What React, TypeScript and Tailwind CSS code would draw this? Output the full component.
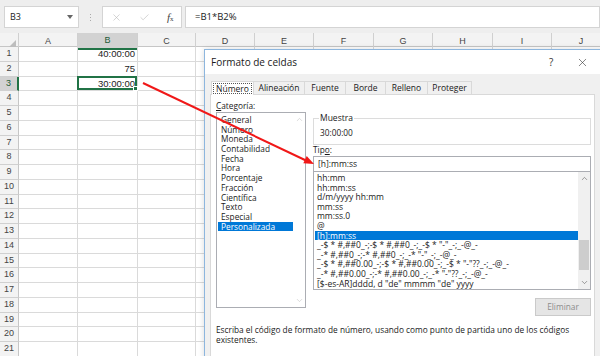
import { X, Check, ChevronUp, ChevronDown } from "lucide-react";

const gridCols = "grid grid-cols-[19px_59px_60px_58px_59px_59px_60px_59px_60px_59px_59px]";
const letters = ["A", "B", "C", "D", "E", "F", "G", "H", "I", "J"];

const values: Record<number, string> = { 1: "40:00:00", 2: "75", 3: "30:00:00" };

const categories = [
    "General", "Número", "Moneda", "Contabilidad", "Fecha", "Hora",
    "Porcentaje", "Fracción", "Científica", "Texto", "Especial", "Personalizada",
];

const types = [
    "hh:mm",
    "hh:mm:ss",
    "d/m/yyyy hh:mm",
    "mm:ss",
    "mm:ss.0",
    "@",
    "[h]:mm:ss",
    '_-$ * #,##0_-;-$ * #,##0_-;_-$ * "-"_-;_-@_-',
    '_-* #,##0_-;-* #,##0_-;_-* "-"_-;_-@_-',
    '_-$ * #,##0.00_-;-$ * #,##0.00_-;_-$ * "-"??_-;_-@_-',
    '_-* #,##0.00_-;-* #,##0.00_-;_-* "-"??_-;_-@_-',
    '[$-es-AR]dddd, d "de" mmmm "de" yyyy',
];

const tabs = ["Número", "Alineación", "Fuente", "Borde", "Relleno", "Proteger"];
const tabWidths = ["w-[43px]", "w-[51px]", "w-[41px]", "w-[40px]", "w-[42px]", "w-[44px]"];

function FormulaBar() {
    return (
        <div className="h-[33px] bg-[#eeeeee] flex items-start pt-[6px] pl-[4px] font-['Open_Sans',sans-serif] text-[9px] text-[#222]">
            <div className="w-[75px] h-[22px] bg-white border border-[#d4d4d4] flex items-center justify-between pl-[5px] pr-[5px]">
                <span>B3</span>
                <svg width="6" height="4" viewBox="0 0 6 4"><path d="M0 0h6L3 4z" fill="#666" /></svg>
            </div>
            <div className="w-[23px] h-[22px] flex flex-col items-center justify-center gap-[2px]">
                <span className="w-[1px] h-[1px] bg-[#aaa]" />
                <span className="w-[1px] h-[1px] bg-[#aaa]" />
                <span className="w-[1px] h-[1px] bg-[#aaa]" />
            </div>
            <div className="w-[80px] h-[22px] bg-white border border-[#d4d4d4] flex items-center pl-[8px] gap-[17px]">
                <X size={11} strokeWidth={1.3} color="#b8b8b8" />
                <Check size={11} strokeWidth={1.3} color="#b8b8b8" />
                <span className="font-['Liberation_Serif',serif] italic text-[11px] text-[#444] leading-none">
                    f<span className="text-[7px] not-italic">x</span>
                </span>
            </div>
            <div className="ml-[3px] flex-1 h-[22px] bg-white border border-[#d4d4d4] flex items-center pl-[9px] text-[9.5px]">
                =B1*B2%
            </div>
        </div>
    );
}

function Sheet() {
    return (
        <div className="font-['Liberation_Sans',sans-serif] text-[9.5px] text-[#222]">
            <div className={`${gridCols} h-[14px] bg-[#f3f3f3] border-b border-[#c6c6c6]`}>
                <div className="border-r border-[#d0d0d0] flex items-end justify-end p-[2px]">
                    <svg width="8" height="8" viewBox="0 0 8 8"><path d="M8 0v8H0z" fill="#bdbdbd" /></svg>
                </div>
                {letters.map((l) => (
                    <div
                        key={l}
                        className={`flex items-center justify-center border-r border-[#d0d0d0] text-[9px] pt-[1px] ${l === "B" ? "bg-[#d2d2d2] border-b-2 border-b-[#217346] text-[#1e5b36]" : "text-[#444]"}`}
                    >
                        {l}
                    </div>
                ))}
            </div>
            {Array.from({ length: 21 }, (_, i) => i + 1).map((r) => (
                <div key={r} className={`${gridCols} h-[14.75px]`}>
                    <div
                        className={`flex items-center justify-center border-b border-[#d0d0d0] text-[9px] ${r === 3 ? "bg-[#d2d2d2] border-r-2 border-r-[#217346] text-[#1e5b36]" : "bg-[#f3f3f3] border-r border-r-[#c6c6c6] text-[#444]"}`}
                    >
                        {r}
                    </div>
                    {letters.map((l) => (
                        <div key={l} className="relative border-r border-b border-[#dadada] flex items-center justify-end pr-[2px] leading-none">
                            {l === "B" && values[r]}
                            {l === "B" && r === 3 && (
                                <div className="absolute -left-[1px] -top-[1px] right-0 bottom-0 border-2 border-[#217346]">
                                    <span className="absolute -right-[3px] -bottom-[3px] w-[5px] h-[5px] bg-[#217346] border border-white" />
                                </div>
                            )}
                        </div>
                    ))}
                </div>
            ))}
        </div>
    );
}

function ListScroll({ dim, thumb }: { dim?: boolean; thumb?: boolean }) {
    const c = dim ? "#c4c4c4" : "#606060";
    return (
        <div className={`w-[12px] flex flex-col items-center justify-between py-[2px] ${dim ? "" : "bg-[#f0f0f0]"}`}>
            <ChevronUp size={9} strokeWidth={1.6} color={c} />
            {thumb && <div className="w-[10px] h-[30px] bg-[#cdcdcd] mt-[57px]" />}
            <div className="flex-1" />
            <ChevronDown size={9} strokeWidth={1.6} color={c} />
        </div>
    );
}

function Dialog() {
    return (
        <div className="absolute left-[204px] top-[49px] w-[410px] h-[320px] border border-[#8db6de] bg-[#f0f0f0] font-['Open_Sans',sans-serif] text-[8.3px] text-[#1a1a1a] shadow-[0_0_6px_rgba(0,0,0,0.15)]">
            <div className="h-[24px] bg-white flex items-center pl-[6px]">
                <span className="w-[338px] text-[10px]">Formato de celdas</span>
                <span className="text-[10px] text-[#333]">?</span>
                <X size={13} strokeWidth={1.1} color="#333" className="ml-[23px]" />
            </div>
            <div className="pl-[5px] pt-[7px] w-[390px]">
                <div className="flex h-[13px] pl-[1px] text-[8.5px]">
                    {tabs.map((t, i) => (
                        <div
                            key={t}
                            className={`${tabWidths[i]} flex items-center justify-center border-t border-r border-[#d9d9d9] ${i === 0 ? "bg-white border-l -mb-[1px] h-[14px] relative z-10" : "bg-[#f0f0f0]"}`}
                        >
                            <span className={i === 0 ? "border border-dotted border-[#555] px-[2px] leading-[9px]" : ""}>{t}</span>
                        </div>
                    ))}
                </div>
                <div className="bg-white border border-[#d9d9d9] h-[280px] pl-[5px] pr-[3px]">
                    <div className="flex">
                        <div className="w-[90px]">
                            <div className="mt-[6px] leading-[10px]"><u>C</u>ategoría:</div>
                            <div className="mt-[1px] h-[196px] border border-[#abadb3] flex">
                                <div className="flex-1 pt-[2px] pl-[1px]">
                                    {categories.map((c) => (
                                        <div
                                            key={c}
                                            className={`leading-[9.7px] h-[9.7px] pl-[3px] ${c === "Personalizada" ? "bg-[#0078d7] text-white" : ""}`}
                                        >
                                            {c}
                                        </div>
                                    ))}
                                </div>
                                <ListScroll dim />
                            </div>
                        </div>
                        <div className="ml-[7px] w-[278px]">
                            <fieldset className="mt-[18px] h-[32px] border border-[#dcdcdc] pl-[6px]">
                                <legend className="px-[1px] -ml-[1px] leading-[10px] text-[8.5px]">Muestra</legend>
                                <div className="leading-[10px] mt-[5px]">30:00:00</div>
                            </fieldset>
                            <div className="leading-[10px]">Tip<u>o</u>:</div>
                            <div className="mt-[1px] h-[16px] border border-[#abadb3] flex items-center pl-[4px] text-[8.5px]">[h]:mm:ss</div>
                            <div className="h-[118px] border border-t-0 border-[#abadb3] flex overflow-hidden text-[8.5px]">
                                <div className="flex-1 pt-[1px] pl-[1px] overflow-hidden">
                                    {types.map((t) => (
                                        <div
                                            key={t}
                                            className={`leading-[9.6px] h-[9.6px] pl-[2px] whitespace-nowrap ${t === "[h]:mm:ss" ? "bg-[#0078d7] text-white" : ""}`}
                                        >
                                            {t}
                                        </div>
                                    ))}
                                </div>
                                <ListScroll thumb />
                            </div>
                            <div className="flex justify-end mt-[8px]">
                                <div className="w-[56px] h-[18px] bg-[#e5e5e5] border border-[#cacaca] flex items-center justify-center text-[#8c8c8c]">
                                    Eliminar
                                </div>
                            </div>
                        </div>
                    </div>
                    <div className="mt-[9px] leading-[10px] w-[375px]">
                        Escriba el código de formato de número, usando como punto de partida uno de los códigos existentes.
                    </div>
                </div>
            </div>
        </div>
    );
}

export default function App() {
    return (
        <div className="relative w-[600px] h-[356px] overflow-hidden bg-white">
            <FormulaBar />
            <Sheet />
            <Dialog />
            <svg className="absolute left-0 top-0 z-20 pointer-events-none" width="600" height="356">
                <line x1="143" y1="83" x2="306" y2="160.5" stroke="#f01818" strokeWidth="2" />
                <polygon points="314,164 303.3,163.3 306.7,156.1" fill="#f01818" />
            </svg>
        </div>
    );
}
